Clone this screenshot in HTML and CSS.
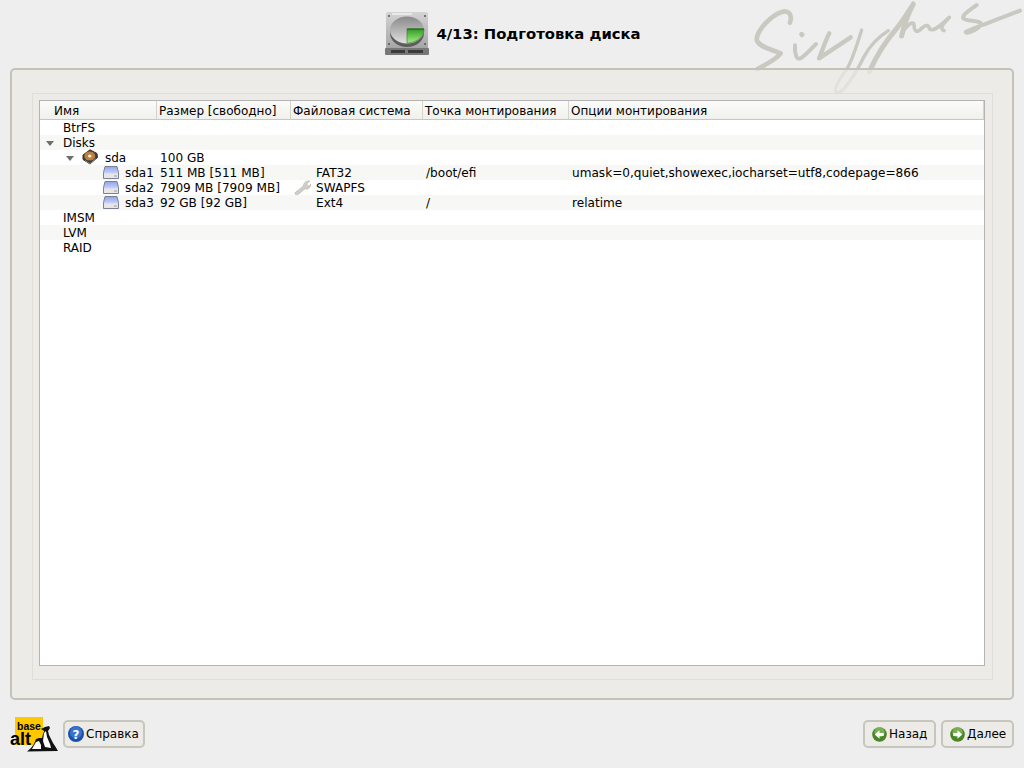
FILE: index.html
```html
<!DOCTYPE html>
<html lang="ru">
<head>
<meta charset="utf-8">
<title>Подготовка диска</title>
<link rel="stylesheet" href="styles.css">
</head>
<body>
<div class="screen">
  <svg class="signature" viewBox="0 0 852 330" width="284" height="110" fill="none" stroke="#c9c9c2" stroke-width="12" stroke-linecap="round" stroke-linejoin="round">
    <path d="M150 68C158 42 145 30 125 36C95 46 52 88 50 118C52 140 95 148 122 160C105 182 80 190 52 208" stroke-width="14"/>
    <path d="M185 103l1 1" stroke-width="15"/>
    <path d="M165 136C163 160 170 182 182 175C198 165 215 145 228 132"/>
    <path d="M268 100C255 125 248 150 237 175L332 112" stroke-width="13"/>
    <path d="M365 90C352 130 338 180 320 208C295 242 280 270 290 278C305 285 342 230 372 170C392 132 420 108 445 92" stroke-width="10"/>
    <path d="M388 215C410 165 440 120 470 85C490 60 505 35 520 12C505 40 492 75 485 108" stroke-width="15"/>
    <path d="M485 100C500 75 520 60 522 75C523 95 530 100 545 85C560 72 565 75 570 88C580 95 610 70 628 52C615 65 595 85 612 92" stroke-width="11"/>
    <path d="M710 15C690 30 665 45 670 55C680 65 730 60 722 75C710 92 672 105 678 95C695 85 770 60 840 32" stroke-width="12"/>
  </svg>
  <header class="title-bar">
    <svg class="title-icon" viewBox="0 0 44 44" width="44" height="44">
      <defs>
        <linearGradient id="body" x1="0" y1="0" x2="0" y2="1"><stop offset="0" stop-color="#d4d4d4"/><stop offset=".8" stop-color="#a8a8a8"/><stop offset="1" stop-color="#8a8a8a"/></linearGradient>
        <linearGradient id="plate" x1="0" y1="0" x2="0" y2="1"><stop offset="0" stop-color="#8a8a8a"/><stop offset=".55" stop-color="#b8b8b8"/><stop offset="1" stop-color="#e2e2e2"/></linearGradient>
        <linearGradient id="pie" x1="0" y1="0" x2="0" y2="1"><stop offset="0" stop-color="#2f9c22"/><stop offset="1" stop-color="#a6ec86"/></linearGradient>
      </defs>
      <rect x="1" y="0" width="42" height="43" rx="2" fill="url(#body)"/>
      <rect x="0" y="36" width="44" height="7" rx="1" fill="#777"/>
      <path d="M6 38H20V41H6ZM23 38H38V41H23Z" fill="#3b3b3b"/>
      <rect x="7" y="1" width="20" height="2" fill="#e9e9e9"/>
      <circle cx="4" cy="4" r="1" fill="#555"/><circle cx="40" cy="4" r="1" fill="#555"/><circle cx="4" cy="32" r="1" fill="#555"/><circle cx="40" cy="32" r="1" fill="#555"/>
      <ellipse cx="22" cy="21" rx="17" ry="14" fill="#5e5e5e"/>
      <ellipse cx="22" cy="18" rx="17" ry="13.500" fill="url(#plate)"/>
      <path d="M22 17H39C39 24 33 30 23 31L22 31Z" fill="url(#pie)" stroke="#2e7a24" stroke-width=".6"/>
      <path d="M22 17H39" stroke="#1f5e18" stroke-width="1" fill="none"/>
    </svg>
    <h1 class="title">4/13: Подготовка диска</h1>
  </header>
  <main class="panel">
    <div class="inner">
      <div class="table">
        <div class="head">
          <div class="hcell name-h">Имя</div>
          <div class="hcell">Размер [свободно]</div>
          <div class="hcell">Файловая система</div>
          <div class="hcell">Точка монтирования</div>
          <div class="hcell">Опции монтирования</div>
        </div>
        <div class="row"><div class="name lvl0">BtrFS</div></div>
        <div class="row alt"><div class="name lvl0"><span class="arrow"></span>Disks</div></div>
        <div class="row"><div class="name lvl1"><span class="arrow"></span><svg class="disk-ic" viewBox="0 0 16 16" width="16" height="16"><path d="M8 .8L15 4.500 15.500 8.500 8 15 1 10.500 1 6Z" fill="#3a3835" stroke="#3a3835" stroke-linejoin="round"/><ellipse cx="7.800" cy="7" rx="5.500" ry="4.500" fill="#b9803f"/><ellipse cx="7.800" cy="7" rx="1.800" ry="1.500" fill="#f6e9d2"/><path d="M3 11.500L8 14.500 14 9.500" fill="none" stroke="#8d8a84"/></svg><span>sda</span></div><div class="cell">100 GB</div></div>
        <div class="row alt"><div class="name lvl2"><svg class="part-ic" viewBox="0 0 16 13" width="16" height="13"><use href="#part"/></svg><span>sda1</span></div><div class="cell">511 MB [511 MB]</div><div class="cell fs">FAT32</div><div class="cell">/boot/efi</div><div class="cell">umask=0,quiet,showexec,iocharset=utf8,codepage=866</div></div>
        <div class="row"><div class="name lvl2"><svg class="part-ic" viewBox="0 0 16 13" width="16" height="13"><use href="#part"/></svg><span>sda2</span></div><div class="cell">7909 MB [7909 MB]</div><div class="cell fs"><svg class="wrench" viewBox="0 0 18 16" width="17" height="15"><path d="M1 14.500C1 13 2 12.500 3 12L10 6.500C10 3 13 .5 17 1L13.500 4 14.500 6 16.500 6.500 18 4C18 8 15 10.500 11.500 9.500L5 15C3 16 1 16 1 14.500Z" fill="#cfcfca" stroke="#aeaea8" stroke-width=".6"/></svg>SWAPFS</div><div class="cell"></div><div class="cell"></div></div>
        <div class="row alt"><div class="name lvl2"><svg class="part-ic" viewBox="0 0 16 13" width="16" height="13"><use href="#part"/></svg><span>sda3</span></div><div class="cell">92 GB [92 GB]</div><div class="cell fs">Ext4</div><div class="cell">/</div><div class="cell">relatime</div></div>
        <div class="row"><div class="name lvl0">IMSM</div></div>
        <div class="row alt"><div class="name lvl0">LVM</div></div>
        <div class="row"><div class="name lvl0">RAID</div></div>
      </div>
    </div>
  </main>
  <footer class="footer">
    <div class="footer-left">
      <div class="logo">
        <span class="logo-base">base</span>
        <span class="logo-alt">alt</span>
        <svg class="logo-birds" viewBox="0 0 32 28" width="32" height="28"><path d="M14 4L18 2 22 1 23 3 21 6 22 10 24 14 26 18 28 21 31 26 0 26.500 4 23 7 19 9 14 12 13 15 13 16 9 17 6Z" fill="#111"/><path d="M17 8L19 6 20 12 23 19 24 23 18 22 16 16Z" fill="#fff"/><path d="M9 17L12 16 14 20 14 24 5 24Z" fill="#fff"/></svg>
      </div>
      <button class="btn help"><svg class="btn-ic" viewBox="0 0 16 16" width="16" height="16"><circle cx="8" cy="8" r="8" fill="#1a4fae"/><circle cx="8" cy="6.500" r="6" fill="#5590e4" opacity=".55"/><text x="8" y="12.500" class="q">?</text></svg>Справка</button>
    </div>
    <div class="footer-right">
      <button class="btn nav"><svg class="btn-ic" viewBox="0 0 16 16" width="15" height="15"><circle cx="8" cy="8" r="7.800" fill="#4a8528"/><circle cx="8" cy="5.500" r="5.500" fill="#8dbf66" opacity=".7"/><path d="M3 8L8 3.500V6.500H12.500V9.500H8V12.500Z" fill="#fff"/></svg>Назад</button>
      <button class="btn nav"><svg class="btn-ic" viewBox="0 0 16 16" width="15" height="15"><circle cx="8" cy="8" r="7.800" fill="#4a8528"/><circle cx="8" cy="5.500" r="5.500" fill="#8dbf66" opacity=".7"/><path d="M13 8L8 3.500V6.500H3.500V9.500H8V12.500Z" fill="#fff"/></svg>Далее</button>
    </div>
  </footer>
  <svg class="defs" width="0" height="0">
    <defs>
      <linearGradient id="pg" x1="0" y1="0" x2="0" y2="1"><stop offset="0" stop-color="#8fa3ea"/><stop offset=".6" stop-color="#ccd5f8"/></linearGradient>
      <g id="part">
        <path d="M2 .5H14L15.500 6.500V12.500H.5V6.500Z" fill="url(#pg)" stroke="#7b8194"/>
        <rect x="1" y="7.500" width="14" height="4.500" fill="#e6e6e6"/>
        <rect x="11" y="9.500" width="3" height="1" fill="#9a9a9a"/>
      </g>
    </defs>
  </svg>
</div>
</body>
</html>
```
FILE: styles.css
```css
* { box-sizing: border-box; }
html, body { margin: 0; padding: 0; }
body { background: #eeeeee; font-family: "DejaVu Sans", sans-serif; font-size: 12px; color: #000; }
.screen { position: relative; width: 1024px; height: 768px; display: flex; flex-direction: column; overflow: hidden; }
.signature { position: absolute; left: 740px; top: 0; pointer-events: none; }
.defs { position: absolute; }
.title-bar { position: relative; height: 68px; display: flex; align-items: center; justify-content: center; gap: 7px; padding: 0 0 1px 2px; }
.title { font-size: 14.800px; font-weight: bold; margin: 0; }
.title-icon { display: block; }
.panel { position: relative; margin: 0 10px; height: 632px; border: 2px solid #c3c3b8; border-radius: 5px; background: rgba(235, 234, 229, .72); padding: 23px 19px 18px 20px; }
.inner { height: 100%; border: 1px solid #dfdfd8; padding: 6px 7px 13px 6px; }
.table { height: 100%; border: 1px solid #b4b4b4; background: #fff; }
.head { display: grid; grid-template-columns: 117px 134px 132px 146px 1fr; grid-template-rows: 18px; height: 19px; border-bottom: 1px solid #c8c8c2; background: linear-gradient(#fbfbfa, #f0f0ec); }
.hcell { line-height: 20px; padding-left: 2px; border-right: 1px solid #d4d4ce; white-space: nowrap; }
.name-h { padding-left: 14px; }
.row { display: grid; grid-template-columns: 117px 134px 132px 146px 1fr; grid-template-rows: 15px; height: 15px; line-height: 17px; white-space: nowrap; }
.alt { background: #f7f7f5; }
.name { display: flex; align-items: flex-start; }
.lvl0 { padding-left: 23px; position: relative; }
.lvl1 { padding-left: 26px; }
.lvl2 { padding-left: 63px; }
.arrow { width: 0; height: 0; margin-top: 6px; border-left: 4.500px solid transparent; border-right: 4.500px solid transparent; border-top: 5px solid #6e6e6e; }
.lvl0 .arrow { position: absolute; left: 6px; top: 0; }
.disk-ic { margin: -1px 7px 0 8px; }
.part-ic { margin: 1px 6px 0 0; }
.cell { padding-left: 3px; font-size: 12.100px; }
.fs { position: relative; padding-left: 25px; }
.wrench { position: absolute; left: 3px; top: 0; }
.footer { position: relative; flex: 1; display: flex; justify-content: space-between; align-items: flex-start; padding: 20px 10px 0 10px; }
.footer-left { display: flex; align-items: flex-start; gap: 5px; }
.footer-right { display: flex; gap: 5px; }
.btn { height: 28px; display: flex; align-items: center; gap: 2px; padding: 0 4px 0 3px; border: 2px solid #c6c6bc; border-radius: 5px; background: #ecebe7; font: 12px "DejaVu Sans", sans-serif; color: #000; }
.nav { width: 73px; padding: 0 0 0 7px; }
.btn-ic { display: block; }
.q { font: bold 12px "DejaVu Sans", sans-serif; fill: #fff; text-anchor: middle; }
.logo { position: relative; width: 48px; height: 36px; margin-top: -3px; }
.logo::before { content: ""; position: absolute; left: 5px; top: 0; width: 28px; height: 28px; background: #ffc800; }
.logo-base { position: absolute; left: 7px; top: 4px; font: bold 10.500px/11px "Liberation Sans", sans-serif; }
.logo-alt { position: absolute; left: 0; top: 15px; font: bold 18px/14px "Liberation Sans", sans-serif; }
.logo-birds { position: absolute; left: 17px; top: 8px; }
```
